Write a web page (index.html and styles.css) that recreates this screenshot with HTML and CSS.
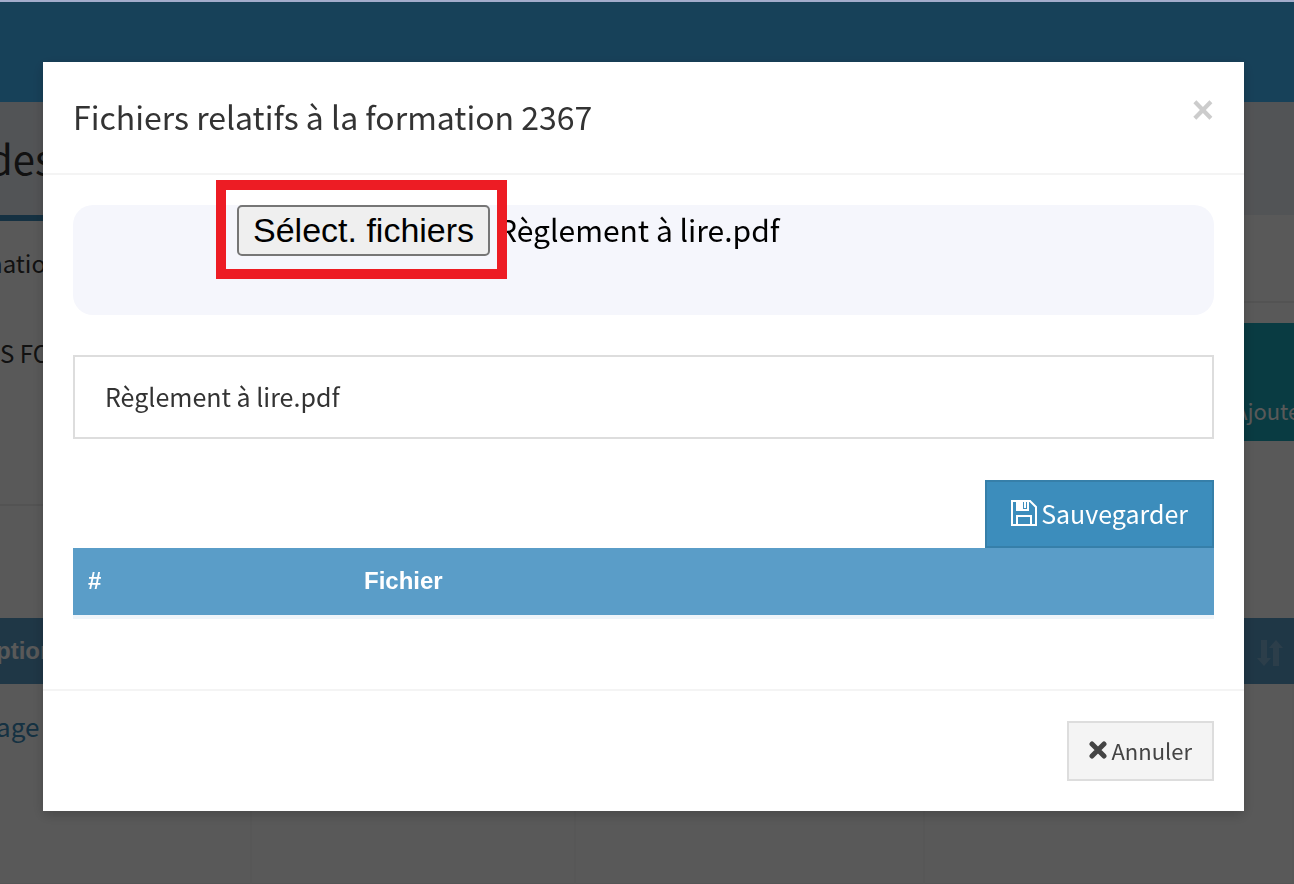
FILE: index.html
```html
<!DOCTYPE html>
<html lang="fr">
<head>
    <meta charset="UTF-8">
    <meta name="viewport" content="width=device-width, initial-scale=1.0">
    <title>Fichiers relatifs à la formation</title>
    <link rel="stylesheet" href="styles.css">
</head>
<body>
    <!-- Page derrière la fenêtre -->
    <div class="page">
        <header class="navbar"></header>
        <div class="content-header">
            <h1>des</h1>
        </div>
        <div class="tab-line"></div>
        <div class="filters">
            <div class="filters-left">
                <p>natio</p>
                <p class="filters-title">S FO</p>
            </div>
            <div class="filters-right">
                <a class="add-btn" href="#">Ajoute</a>
            </div>
        </div>
        <table class="list">
            <thead>
                <tr>
                    <th class="col-desc"><span class="cut">ption</span></th>
                    <th class="col-date"></th>
                    <th class="col-place"></th>
                    <th class="sort">
                        <svg width="26" height="28" viewBox="0 0 26 28" fill="currentColor" aria-hidden="true">
                            <path d="M4 1h6v18h4l-7 8-7-8h4z"/>
                            <path d="M16 27h6V9h4l-7-8-7 8h4z"/>
                        </svg>
                    </th>
                </tr>
            </thead>
            <tbody>
                <tr>
                    <td><a class="cut" href="#">age</a></td>
                    <td></td>
                    <td></td>
                    <td></td>
                </tr>
            </tbody>
        </table>
    </div>

    <!-- Fenêtre des fichiers -->
    <div class="modal-backdrop">
        <div class="modal" role="dialog" aria-labelledby="modalTitle">
            <div class="modal-header">
                <h2 id="modalTitle">Fichiers relatifs à la formation 2367</h2>
                <button type="button" class="close" aria-label="Fermer">×</button>
            </div>
            <div class="modal-body">
                <div class="dropzone">
                    <input type="file" id="files" aria-label="Fichiers" multiple hidden>
                    <span class="highlight">
                        <button type="button" class="file-btn" id="fileBtn">Sélect. fichiers</button>
                    </span>
                    <span class="file-name" id="fileName">Règlement à lire.pdf</span>
                </div>
                <div class="file-item" id="fileItem">Règlement à lire.pdf</div>
                <div class="actions">
                    <button type="button" class="btn btn-primary">
                        <svg width="26" height="26" viewBox="0 0 26 26" fill="none" stroke="currentColor" stroke-width="2" aria-hidden="true">
                            <path d="M1 1h18l6 6v18H1z"/>
                            <path d="M6 25v-9h14v9"/>
                            <path d="M6 1v9h11V1"/>
                            <path d="M6 1h5v9H6zM14 2v6" fill="currentColor"/>
                        </svg>
                        Sauvegarder
                    </button>
                </div>
                <table class="files">
                    <thead>
                        <tr>
                            <th class="col-num">#</th>
                            <th>Fichier</th>
                        </tr>
                    </thead>
                </table>
            </div>
            <div class="modal-footer">
                <button type="button" class="btn btn-default">
                    <svg width="18" height="18" viewBox="0 0 18 18" stroke="currentColor" stroke-width="5" aria-hidden="true">
                        <path d="M3 3l12 12M15 3L3 15" stroke-linecap="round"/>
                    </svg>
                    Annuler
                </button>
            </div>
        </div>
    </div>

    <script>
        const input = document.getElementById('files');

        document.getElementById('fileBtn').addEventListener('click', function() {
            input.click();
        });

        input.addEventListener('change', function() {
            const names = Array.from(input.files).map(f => f.name).join(', ');
            document.getElementById('fileName').textContent = names;
            document.getElementById('fileItem').textContent = names;
        });
    </script>
</body>
</html>
```
FILE: styles.css
```css
* {
    box-sizing: border-box;
}
body {
    margin: 0;
    font-family: 'Noto Sans CJK SC', 'Open Sans', sans-serif;
    font-size: 24px;
    line-height: 32px;
    color: #333;
    overflow: hidden;
}
h1, h2, p {
    margin: 0;
    font-weight: normal;
}
button {
    font-family: inherit;
    cursor: pointer;
}

/* Page */
.page {
    display: flex;
    flex-direction: column;
    height: 100vh;
    background: #fff;
    overflow: hidden;
}
.navbar {
    height: 102px;
    background: #44b9ff;
}
.content-header {
    height: 113px;
    padding-top: 30px;
    background: #ecf0f5;
}
.content-header h1 {
    margin-left: -12px;
    font-size: 40px;
    line-height: 52px;
}
.tab-line {
    width: 50%;
    height: 6px;
    background: #3c8dbc;
}
.filters {
    display: flex;
    height: 397px;
}
.filters-left {
    flex: 1;
    height: 285px;
    padding-top: 26px;
    border-bottom: 2px solid #eee;
}
.filters-left p {
    margin-left: -12px;
}
.filters-left .filters-title {
    margin: 58px 0 0;
}
.filters-right {
    flex: 1;
    height: 82px;
    border-bottom: 2px solid #eee;
}
.add-btn {
    display: block;
    width: 60px;
    height: 118px;
    margin: 102px 0 0 auto;
    padding-top: 71px;
    background: #1ba8bd;
    color: #fff;
    font-size: 22px;
    text-decoration: none;
}
.list {
    width: 100%;
    flex: 1;
    border-spacing: 0;
    table-layout: fixed;
}
.list th {
    height: 66px;
    padding: 0;
    background: #5a9dc8;
    color: #fff;
    font-family: 'Liberation Sans', Arial, sans-serif;
    text-align: left;
}
.list .col-desc {
    width: 19.5%;
}
.list .col-date {
    width: 25%;
}
.list .col-place {
    width: 27%;
}
.list .sort {
    padding-right: 11px;
    color: #7fb2d4;
    text-align: right;
}
.list .sort svg {
    display: inline-block;
    vertical-align: middle;
}
.list td {
    padding: 26px 0 0;
    border-right: 2px solid #f9f9f9;
    border-bottom: 1px solid #f4f4f4;
    font-size: 26px;
    vertical-align: top;
}
.list a {
    color: #3c8dbc;
    text-decoration: none;
}
.cut {
    margin-left: -4px;
}

/* Modal */
.modal-backdrop {
    position: fixed;
    inset: 0;
    padding: 60px 50px 0 43px;
    border-top: 2px solid #a3accb;
    background: rgba(0, 0, 0, 0.65);
}
.modal {
    background: #fff;
    box-shadow: 0 4px 12px rgba(0, 0, 0, 0.2);
}
.modal-header {
    display: flex;
    justify-content: space-between;
    padding: 29px 30px 31px;
    border-bottom: 2px solid #f4f4f4;
}
.modal-header h2 {
    font-size: 32px;
    line-height: 51px;
}
.close {
    align-self: flex-start;
    padding: 0;
    border: none;
    background: none;
    color: #ccc;
    font-family: 'Liberation Sans', Arial, sans-serif;
    font-size: 38px;
    font-weight: bold;
    line-height: 38px;
}
.modal-body {
    min-height: 514px;
    padding: 30px;
}
.dropzone {
    display: flex;
    align-items: flex-start;
    gap: 8px;
    height: 110px;
    padding-left: 164px;
    border-radius: 20px;
    background: #f5f6fc;
}
.highlight {
    position: relative;
    z-index: 1;
}
.highlight::after {
    content: '';
    position: absolute;
    inset: -25px -17px -23px -21px;
    border: 10px solid #ed1c24;
    pointer-events: none;
}
.file-btn {
    display: block;
    height: 51px;
    padding: 0 14px 2px;
    border: 2px solid #767676;
    border-radius: 5px;
    background: #efefef;
    color: #000;
    font-family: 'Liberation Sans', Arial, sans-serif;
    font-size: 34px;
    line-height: 44px;
}
.file-name {
    color: #000;
    font-size: 30px;
    line-height: 48px;
}
.file-item {
    margin-top: 40px;
    padding: 23px 30px 25px;
    border: 2px solid #ddd;
    font-size: 25px;
}
.actions {
    display: flex;
    justify-content: flex-end;
    margin-top: 41px;
}
.btn {
    display: flex;
    align-items: center;
    gap: 4px;
    border: 2px solid;
}
.btn-primary {
    height: 68px;
    padding: 0 24px 2px;
    border-color: #367fa9;
    background: #3c8dbc;
    color: #fff;
    font-size: 25px;
}
.btn-default {
    height: 60px;
    padding: 0 20px 2px;
    border-color: #ddd;
    background: #f4f4f4;
    color: #444;
    font-size: 22px;
}
.files {
    width: 100%;
    border-spacing: 0;
    border-bottom: 4px solid #eff5fa;
}
.files th {
    height: 67px;
    padding: 0 15px 2px;
    background: #5a9dc8;
    color: #fff;
    font-family: 'Liberation Sans', Arial, sans-serif;
    text-align: left;
}
.files .col-num {
    width: 276px;
}
.modal-footer {
    display: flex;
    justify-content: flex-end;
    padding: 30px;
    border-top: 2px solid #f4f4f4;
}
```
